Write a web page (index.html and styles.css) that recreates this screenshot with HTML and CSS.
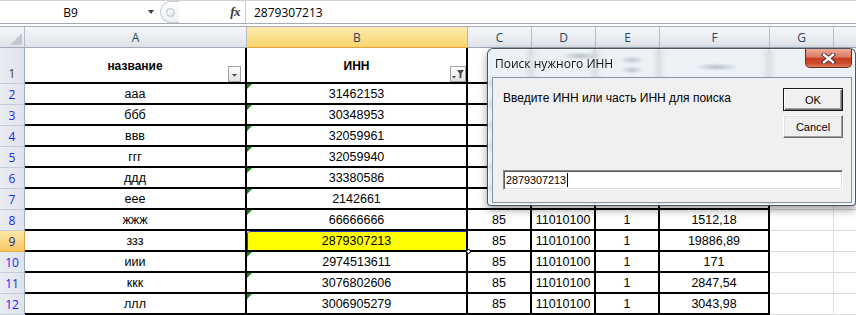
FILE: index.html
```html
<!DOCTYPE html>
<html lang="ru">
<head>
<meta charset="utf-8">
<title>Excel — поиск ИНН</title>
<link rel="stylesheet" href="styles.css">
</head>
<body>
<div class="fbar">
  <div class="namebox"><span>B9</span><span class="nb-arrow"></span></div>
  <div class="fgrip"><span class="grip-dot"></span></div>
  <div class="fx-area"><span class="fx">fx</span></div>
  <div class="fval">2879307213</div>
</div>
<div class="fgap"></div>
<div class="sheet">
  <!-- column headers -->
  <div class="ch corner"><svg width="12" height="12" viewBox="0 0 12 12"><polygon points="12,0 12,12 0,12" fill="#c3c8cf"/></svg></div>
  <div class="ch">A</div>
  <div class="ch sel">B</div>
  <div class="ch">C</div>
  <div class="ch">D</div>
  <div class="ch">E</div>
  <div class="ch">F</div>
  <div class="ch">G</div>
  <div class="ch"></div>

  <!-- row 1 -->
  <div class="rh r1">1</div>
  <div class="c b hd">название<span class="fb fb-a"><svg width="14" height="14" viewBox="0 0 14 14"><polygon points="3.5,7 10.5,7 7,10.5" fill="#555"/></svg></span></div>
  <div class="c b hd">ИНН<span class="fb"><svg width="14" height="14" viewBox="0 0 14 14"><polygon points="6,3 13,3 10.5,6.5 10.5,10.5 8.5,11.5 8.5,6.5" fill="#4a4a4a"/><polygon points="1,9 5,9 3,11.5" fill="#4a4a4a"/></svg></span></div>
  <div class="c b"></div>
  <div class="c b"></div>
  <div class="c b"></div>
  <div class="c b"></div>
  <div class="c"></div>
  <div class="c"></div>

  <!-- row 2 -->
  <div class="rh">2</div>
  <div class="c b">ааа</div>
  <div class="c b g">31462153</div>
  <div class="c b"></div><div class="c b"></div><div class="c b"></div><div class="c b"></div>
  <div class="c"></div><div class="c"></div>

  <!-- row 3 -->
  <div class="rh">3</div>
  <div class="c b">ббб</div>
  <div class="c b g">30348953</div>
  <div class="c b"></div><div class="c b"></div><div class="c b"></div><div class="c b"></div>
  <div class="c"></div><div class="c"></div>

  <!-- row 4 -->
  <div class="rh">4</div>
  <div class="c b">ввв</div>
  <div class="c b g">32059961</div>
  <div class="c b"></div><div class="c b"></div><div class="c b"></div><div class="c b"></div>
  <div class="c"></div><div class="c"></div>

  <!-- row 5 -->
  <div class="rh">5</div>
  <div class="c b">ггг</div>
  <div class="c b g">32059940</div>
  <div class="c b"></div><div class="c b"></div><div class="c b"></div><div class="c b"></div>
  <div class="c"></div><div class="c"></div>

  <!-- row 6 -->
  <div class="rh">6</div>
  <div class="c b">ддд</div>
  <div class="c b g">33380586</div>
  <div class="c b"></div><div class="c b"></div><div class="c b"></div><div class="c b"></div>
  <div class="c"></div><div class="c"></div>

  <!-- row 7 -->
  <div class="rh">7</div>
  <div class="c b">еее</div>
  <div class="c b g">2142661</div>
  <div class="c b"></div><div class="c b"></div><div class="c b"></div><div class="c b"></div>
  <div class="c"></div><div class="c"></div>

  <!-- row 8 -->
  <div class="rh">8</div>
  <div class="c b">жжж</div>
  <div class="c b g">66666666</div>
  <div class="c b">85</div><div class="c b">11010100</div><div class="c b">1</div><div class="c b">1512,18</div>
  <div class="c"></div><div class="c"></div>

  <!-- row 9 -->
  <div class="rh sel">9</div>
  <div class="c b">ззз</div>
  <div class="c b active">2879307213<span class="pk"></span><span class="handle"></span></div>
  <div class="c b">85</div><div class="c b">11010100</div><div class="c b">1</div><div class="c b">19886,89</div>
  <div class="c"></div><div class="c"></div>

  <!-- row 10 -->
  <div class="rh">10</div>
  <div class="c b">иии</div>
  <div class="c b g">2974513611</div>
  <div class="c b">85</div><div class="c b">11010100</div><div class="c b">1</div><div class="c b">171</div>
  <div class="c"></div><div class="c"></div>

  <!-- row 11 -->
  <div class="rh">11</div>
  <div class="c b">ккк</div>
  <div class="c b g">3076802606</div>
  <div class="c b">85</div><div class="c b">11010100</div><div class="c b">1</div><div class="c b">2847,54</div>
  <div class="c"></div><div class="c"></div>

  <!-- row 12 -->
  <div class="rh">12</div>
  <div class="c b">ллл</div>
  <div class="c b g">3006905279</div>
  <div class="c b">85</div><div class="c b">11010100</div><div class="c b">1</div><div class="c b">3043,98</div>
  <div class="c"></div><div class="c"></div>
</div>

<div class="dialog">
  <div class="dlg-title">
    <span class="dlg-caption">Поиск нужного ИНН</span>
    <span class="dlg-close"><svg width="15" height="11" viewBox="0 0 15 11"><path d="M3 1.8 L12 9.2 M12 1.8 L3 9.2" stroke="#4a2622" stroke-width="4.2" stroke-linecap="square"/><path d="M3 1.8 L12 9.2 M12 1.8 L3 9.2" stroke="#ffffff" stroke-width="2.4" stroke-linecap="square"/></svg></span>
  </div>
  <div class="dlg-client">
    <div class="dlg-top">
      <div class="dlg-prompt">Введите ИНН или часть ИНН для поиска</div>
      <div class="dlg-btns">
        <span class="btn btn-default">OK</span>
        <span class="btn">Cancel</span>
      </div>
    </div>
    <div class="dlg-input">2879307213<span class="caret"></span></div>
  </div>
</div>
</body>
</html>
```

FILE: styles.css
```css
* { box-sizing: border-box; }
html, body { margin: 0; padding: 0; }
body {
  width: 856px;
  height: 315px;
  overflow: hidden;
  background: #ffffff;
  position: relative;
  font-family: "Liberation Sans", Arial, sans-serif;
  color: #000;
}

/* ---------- formula bar ---------- */
.fbar {
  display: flex;
  height: 24px;
  border-top: 1px solid #cdd2d8;
  border-bottom: 1px solid #a3acb8;
  background: #fff;
  font-family: "Open Sans", "Liberation Sans", sans-serif;
  font-size: 12px;
}
.namebox {
  position: relative;
  width: 159px;
  display: flex;
  align-items: center;
  justify-content: center;
  padding-right: 18px;
}
.nb-arrow {
  position: absolute;
  right: 5px;
  top: 9px;
  width: 0;
  height: 0;
  border-left: 3.5px solid transparent;
  border-right: 3.5px solid transparent;
  border-top: 4px solid #3c3c3c;
}
.fgrip {
  width: 19px;
  margin-left: 1px;
  display: flex;
  align-items: center;
  justify-content: center;
  border: 1px solid #c9ced5;
  border-right: none;
  border-radius: 11px 0 0 11px;
  background: linear-gradient(#ffffff, #eef0f3);
}
.grip-dot {
  width: 9px;
  height: 9px;
  border-radius: 50%;
  border: 1px solid #bcc2ca;
  background: radial-gradient(circle at 40% 35%, #ffffff, #d6dbe1);
}
.fx-area {
  width: 67px;
  display: flex;
  align-items: center;
  justify-content: flex-end;
  padding-right: 5px;
  border-right: 1px solid #c3c9d1;
}
.fx {
  font-family: "Liberation Serif", serif;
  font-style: italic;
  font-weight: bold;
  font-size: 13px;
  color: #3a3a3a;
  letter-spacing: -0.5px;
}
.fval {
  display: flex;
  align-items: center;
  padding-left: 8px;
}
.fgap {
  height: 3px;
  border-bottom: 1px solid #a3acb8;
  background: #fff;
}

/* ---------- sheet grid ---------- */
.sheet {
  display: grid;
  grid-template-columns: 25px 222px 221px 64px 64px 64px 110px 64px 64px;
  grid-template-rows: 21px 36px repeat(11, 21px);
  width: max-content;
}
.ch {
  display: flex;
  align-items: center;
  justify-content: center;
  background: linear-gradient(#f5f7fa, #dfe3e9);
  border-right: 1px solid #b3bcc7;
  border-bottom: 1px solid #9eaab8;
  font-family: "Open Sans", "Liberation Sans", sans-serif;
  font-size: 12px;
  color: #2b4262;
}
.ch.corner {
  justify-content: flex-end;
  align-items: flex-end;
  padding: 0 2px 2px 0;
}
.ch.sel {
  background: linear-gradient(#fdebb0, #fbd56e);
  border-bottom-color: #e2a23c;
  border-right-color: #e0b25e;
}
.rh {
  display: flex;
  align-items: center;
  justify-content: center;
  background: linear-gradient(90deg, #e9edf2, #dfe4ea);
  border-right: 1px solid #9eadbf;
  border-bottom: 1px solid #c3ccd7;
  font-family: "Open Sans", "Liberation Sans", sans-serif;
  font-size: 12px;
  color: #1f24f0;
}
.rh.r1 {
  align-items: flex-end;
  padding-bottom: 1px;
  color: #5e3a22;
}
.rh.sel {
  background: linear-gradient(#fde7a6, #f6c662);
  border-right-color: #e0a13c;
  border-bottom-color: #e2a94c;
  color: #232a8c;
}
.c {
  position: relative;
  display: flex;
  align-items: center;
  justify-content: center;
  border-right: 1px solid #dadcdd;
  border-bottom: 1px solid #dadcdd;
  font-size: 12.5px;
  white-space: nowrap;
}
.c.b {
  border-right: 2px solid #000;
  border-bottom: 2px solid #000;
}
.c.hd {
  font-weight: bold;
  font-size: 12px;
  padding-top: 2px;
}
.c.g::before {
  content: "";
  position: absolute;
  top: 0;
  left: 0;
  width: 0;
  height: 0;
  border-top: 5px solid #118c11;
  border-right: 5px solid transparent;
}
.c.active {
  background: #ffff00;
  box-shadow: inset 1px 1px 0 #1c3cb4;
}
.pk {
  position: absolute;
  left: 0;
  top: 0;
  width: 3px;
  height: 2px;
  background: #e48fd8;
}
.handle {
  position: absolute;
  right: -5px;
  bottom: -4px;
  width: 5px;
  height: 5px;
  border: 1px solid #000;
  border-radius: 50%;
  background: #fff;
  z-index: 2;
}
.fb {
  position: absolute;
  right: 0;
  bottom: 0;
  width: 16px;
  height: 16px;
  border: 1px solid #a3a3a3;
  background: linear-gradient(#ffffff, #e3e3e3);
  display: flex;
  align-items: center;
  justify-content: center;
}
.fb.fb-a { right: 4px; width: 13px; }

/* ---------- dialog ---------- */
.dialog {
  position: absolute;
  left: 487px;
  top: 48px;
  width: 369px;
  height: 158px;
  display: flex;
  flex-direction: column;
  padding: 0 3px 2px 4px;
  border: 1px solid rgba(45, 55, 70, 0.85);
  border-radius: 6px 6px 4px 4px;
  background: rgba(230, 236, 243, 0.74);
  backdrop-filter: blur(3px);
  -webkit-backdrop-filter: blur(3px);
  box-shadow: 0 4px 9px rgba(0, 0, 0, 0.38), inset 0 0 0 1px rgba(255, 255, 255, 0.6);
  z-index: 10;
}
.dlg-title {
  height: 28px;
  display: flex;
  align-items: center;
  padding-left: 3px;
  background:
    radial-gradient(ellipse 20px 4px at 88px 7px, rgba(90, 100, 115, 0.35), transparent),
    radial-gradient(ellipse 12px 4px at 140px 11px, rgba(90, 100, 115, 0.3), transparent),
    radial-gradient(ellipse 12px 4px at 140px 21px, rgba(90, 100, 115, 0.3), transparent),
    radial-gradient(ellipse 22px 4px at 225px 18px, rgba(90, 100, 115, 0.35), transparent);
}
.dlg-caption {
  font-family: "Open Sans", "Noto Sans", sans-serif;
  font-size: 12px;
  color: #111;
}
.dlg-close {
  margin-left: auto;
  align-self: flex-start;
  width: 47px;
  height: 19px;
  display: flex;
  align-items: center;
  justify-content: center;
  border: 1px solid #6b2b20;
  border-top: none;
  border-radius: 0 0 5px 5px;
  background: linear-gradient(#eeaa98 0%, #dd7a64 45%, #c73c22 52%, #cc4d30 80%, #df7e60 100%);
}
.dlg-client {
  flex: 1;
  display: flex;
  flex-direction: column;
  padding: 10px 8px 12px 10px;
  border: 1px solid #8795a8;
  background: #f0f0f0;
}
.dlg-top {
  display: flex;
  justify-content: space-between;
  align-items: flex-start;
}
.dlg-prompt {
  padding-top: 3px;
  font-size: 12px;
  line-height: 14px;
}
.dlg-btns {
  display: flex;
  flex-direction: column;
  gap: 4px;
}
.btn {
  width: 60px;
  height: 23px;
  display: flex;
  align-items: center;
  justify-content: center;
  font-size: 11px;
  background: #f0f0f0;
  border: 1px solid;
  border-color: #ffffff #6a6a6a #6a6a6a #ffffff;
  box-shadow: inset -1px -1px 0 #a0a0a0, inset 1px 1px 0 #e3e3e3;
}
.btn-default {
  border: 1px solid #1a1a1a;
  box-shadow: inset 1px 1px 0 #ffffff, inset -1px -1px 0 #696969, inset -2px -2px 0 #a0a0a0;
}
.dlg-input {
  margin-top: auto;
  height: 20px;
  display: flex;
  align-items: center;
  padding-left: 2px;
  font-size: 10.8px;
  background: #fff;
  border: 1px solid;
  border-color: #8a8a8a #ffffff #ffffff #8a8a8a;
  box-shadow: inset 1px 1px 0 #5d5d5d, inset -1px -1px 0 #e3e3e3;
}
.caret {
  width: 1px;
  height: 14px;
  margin-left: 1px;
  background: #000;
}
```
